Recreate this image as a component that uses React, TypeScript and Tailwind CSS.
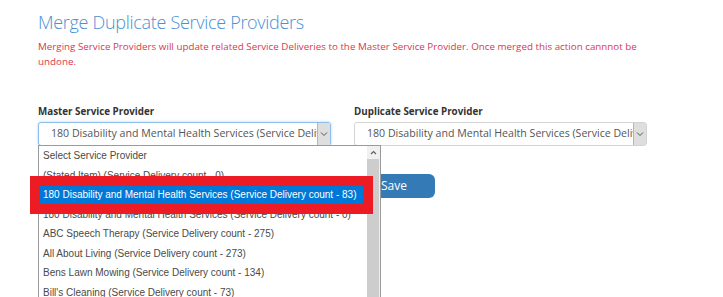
import React from 'react';

const options = [
  'Select Service Provider',
  '(Stated Item) (Service Delivery count - 0)',
  '180 Disability and Mental Health Services (Service Delivery count - 83)',
  '180 Disability and Mental Health Services (Service Delivery count - 0)',
  'ABC Speech Therapy (Service Delivery count - 275)',
  'All About Living (Service Delivery count - 273)',
  'Bens Lawn Mowing (Service Delivery count - 134)',
  "Bill's Cleaning (Service Delivery count - 73)",
];

function Chevron() {
  return (
    <svg width="8" height="6" viewBox="0 0 8 6" fill="none">
      <path d="M1 1.5 L4 4.5 L7 1.5" stroke="#555" strokeWidth="1" />
    </svg>
  );
}

function SelectBox({ focused }: { focused?: boolean }) {
  return (
    <div
      className={`flex h-[24px] w-[293px] items-center rounded-[3px] border bg-white ${
        focused ? 'border-[#8dbde9] shadow-[0_0_3px_rgba(102,175,233,0.5)]' : 'border-[#d4d4d4]'
      }`}
    >
      <span className="min-w-0 flex-1 overflow-hidden whitespace-nowrap pl-[12px] text-[10.6px] text-[#555]">
        180 Disability and Mental Health Services (Service Delivery count - 83)
      </span>
      <span className="flex h-full w-[13px] shrink-0 items-center justify-center border-l border-[#b5b5b5] bg-[#dedede]">
        <Chevron />
      </span>
    </div>
  );
}

export default function App() {
  return (
    <div className="relative h-[297px] w-[723px] overflow-hidden bg-white pl-[38px] pt-[9px] font-['Open_Sans',sans-serif]">
      {/* Heading */}
      <h1 className="text-[18px] font-light leading-[26px] tracking-[-0.3px] text-[#4a90d4]">
        Merge Duplicate Service Providers
      </h1>
      <p className="mt-[4px] w-[600px] text-[9.8px] leading-[15px] text-[#d9384e]">
        Merging Service Providers will update related Service Deliveries to the Master Service Provider. Once merged
        this action cannnot be undone.
      </p>

      {/* Selects */}
      <div className="mt-[36px] flex gap-[23px]">
        <div className="relative">
          <label className="block text-[9.8px] font-bold leading-[14px] text-[#333]">Master Service Provider</label>
          <div className="mt-[3px]">
            <SelectBox focused />
          </div>

          {/* Open dropdown list */}
          <div className="absolute left-0 top-[40px] z-10 h-[160px] w-[343px] border border-[#9a9a9a] bg-white">
            <div className="flex h-full">
              <div className="min-w-0 flex-1 overflow-hidden font-['Liberation_Sans',sans-serif] text-[10px]">
                {options.map((o, i) => (
                  <div
                    key={o}
                    className={`h-[19.5px] whitespace-nowrap pl-[4px] leading-[19.5px] ${
                      i === 2 ? 'bg-[#0078d7] text-white' : 'text-[#4a4a4a]'
                    }`}
                  >
                    {o}
                  </div>
                ))}
              </div>
              <div className="flex w-[13px] shrink-0 flex-col bg-[#f0f0f0]">
                <div className="flex h-[13px] items-center justify-center">
                  <svg width="7" height="5" viewBox="0 0 7 5">
                    <path d="M1 4 L3.5 1.5 L6 4" stroke="#606060" strokeWidth="1.2" fill="none" />
                  </svg>
                </div>
                <div className="mr-[1px] flex-1 bg-[#cdcdcd]" />
              </div>
            </div>
          </div>

          {/* Annotation box */}
          <div className="absolute left-[-8px] top-[71px] z-20 h-[38px] w-[343px] border-[10px] border-[#ed1c24]" />
        </div>

        <div>
          <label className="block text-[9.8px] font-bold leading-[14px] text-[#333]">Duplicate Service Provider</label>
          <div className="mt-[3px]">
            <SelectBox />
          </div>
        </div>
      </div>

      {/* Save */}
      <div className="mt-[26px] pl-[330px]">
        <button className="h-[24px] rounded-[6px] bg-[#337ab7] pl-[13px] pr-[28px] text-[12px] text-white">Save</button>
      </div>
    </div>
  );
}
